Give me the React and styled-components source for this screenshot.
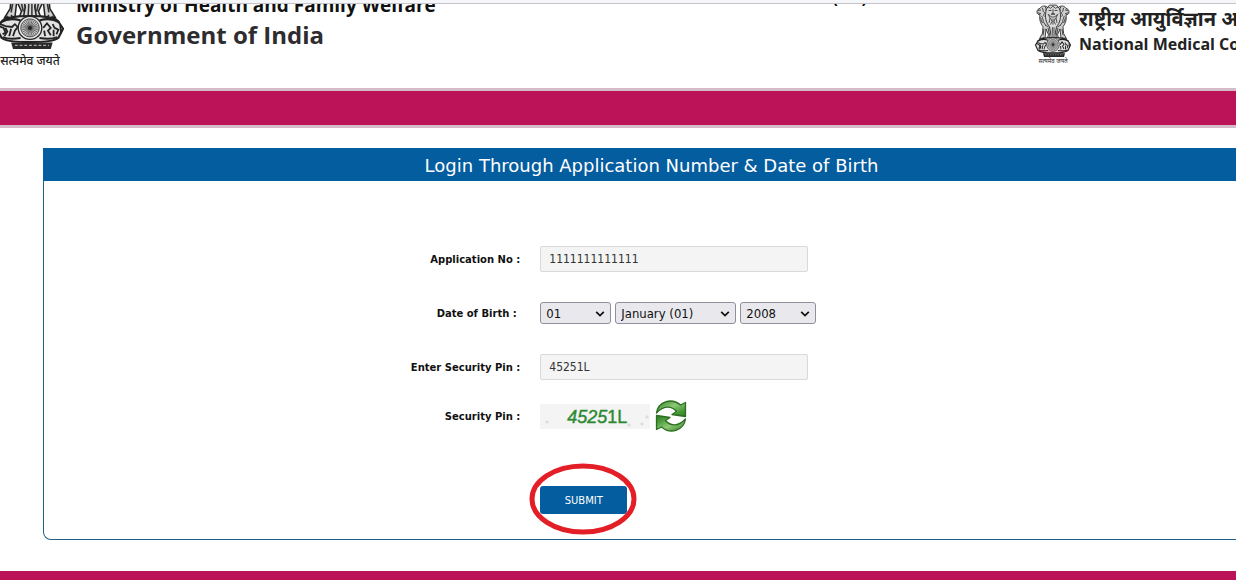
import styled, { createGlobalStyle } from "styled-components";

const digits = (n) => String(n).padStart(2, "0");
const days = Array.from({ length: 31 }, (_, i) => digits(i + 1));
const months = [
  "January", "February", "March", "April", "May", "June", "July",
  "August", "September", "October", "November", "December",
].map((name, i) => `${name} (${digits(i + 1)})`);
const years = Array.from({ length: 30 }, (_, i) => String(2008 - i));

function DateSelect({ label, options, width }) {
  return (
    <SelectBox $width={width}>
      <Select aria-label={label} defaultValue={options[0]}>
        {options.map((option) => (
          <option key={option}>{option}</option>
        ))}
      </Select>
      <svg width="10" height="8" viewBox="0 0 10 8" fill="none" stroke="#111" strokeWidth="1.7">
        <path d="M1.2 1.8 L5 5.6 L8.8 1.8" />
      </svg>
    </SelectBox>
  );
}

// one animal of the capital; the second one is mirrored
function Lion({ flip }) {
  return (
    <g transform={flip ? "translate(72 0) scale(-1 1)" : undefined}>
      <path
        d="M10 8 C4 9 2 16 6 19 L10 20 C8 28 11 36 16 42 L15 54 L9 64 H20 L22 46 L27 57 L24 65 H32 L30 40 L32 16 L26 7 C21 2 13 3 10 8 Z"
        fill="#d0d0d0" stroke="#222" strokeWidth="1.6"
      />
      <path
        d="M6 12 L12 11 M5 16 L12 18 M14 7 C18 10 14 13 18 15 S14 20 19 23 M20 5 C25 9 19 12 24 15 S19 20 24 24 M13 22 C17 26 13 28 18 31 M22 25 C27 29 21 32 27 35 M11 25 C13 28 11 30 15 35 M15 31 L21 39 M20 39 L27 42 M18 46 L16 58 M26 44 L29 57 M11 62 L14 64 M16 61 L18 64"
        fill="none" stroke="#333" strokeWidth="1.7"
      />
    </g>
  );
}

function Emblem({ width, height }) {
  return (
    <svg width={width} height={height} viewBox="0 0 72 98" preserveAspectRatio="none" aria-hidden="true">
      <Lion />
      <Lion flip />
      <path d="M23 9 C18 25 23 36 29 42 L31 52 L29 64 H43 L41 52 L43 42 C49 36 54 25 49 9 L43 2 H29 Z" fill="#d8d8d8" stroke="#222" strokeWidth="1.6" />
      <path
        d="M26 5 L31 8 L36 4 L41 8 L46 5 M27 12 H33 M39 12 H45 M36 9 V17 L32 19 H40 L36 17 M28 20 Q36 29 44 20 M26 18 L30 26 L28 35 M46 18 L42 26 L44 35 M31 26 L34 32 L31 38 M41 26 L38 32 L41 38 M36 27 V38 M35 43 L34 63 M38 43 L38 63"
        fill="none" stroke="#333" strokeWidth="1.6"
      />
      <path d="M6 68 C12 60 60 60 66 68 L71 76 L66 86 C58 92 14 92 6 86 L1 76 Z" fill="#e2e2e2" stroke="#222" strokeWidth="2.2" />
      <path d="M5 69 C13 64 20 65 26 67 M67 69 C59 64 52 65 46 67 M7 85 C14 88 20 87 26 86 M65 85 C58 88 52 87 46 86" stroke="#222" fill="none" strokeWidth="2.2" />
      <path d="M3 73 L8 75 L10 80 L7 82 M5 71 L10 73 L17 74 L20 71 L23 74 L20 78 L18 84 M10 75 L12 79 L9 84 M16 76 L14 84" fill="none" stroke="#222" strokeWidth="1.9" />
      <path d="M50 75 L54 70 L58 75 L55 78 L58 83 M51 78 L52 84 M60 71 L62 75 L66 77 L64 82 M68 72 L69 81 M61 77 L61 84" fill="none" stroke="#222" strokeWidth="1.9" />
      <circle cx="36" cy="75" r="12.5" fill="#e6e6e6" stroke="#222" strokeWidth="1.4" />
      <circle cx="36" cy="75" r="9.8" fill="#ccc" stroke="#444" />
      {Array.from({ length: 12 }, (_, i) => (
        <path key={i} d="M36 65.5 V84.5" stroke="#555" strokeWidth=".8" transform={`rotate(${i * 15} 36 75)`} />
      ))}
      <circle cx="36" cy="75" r="2" fill="#222" />
      <path d="M16 91 H60 L58 98 H18 Z" fill="#2a2a2a" />
      <path d="M20 94 H56" stroke="#aaa" strokeWidth="1.2" strokeDasharray="3 2" />
    </svg>
  );
}

function RefreshIcon() {
  const arrow = "M1.5 13 C3 2 16 -3 25.5 5 L30.5 2.5 V16.5 L17 14.5 L21.5 11.5 C16 5 8 6 1.5 13 Z";
  return (
    <svg width="32" height="32" viewBox="0 0 32 32" aria-hidden="true">
      <defs>
        <linearGradient id="leaf" x1="0" y1="0" x2="1" y2="1">
          <stop offset="0" stopColor="#2f7f24" />
          <stop offset=".45" stopColor="#8fc878" />
          <stop offset=".75" stopColor="#4b9a3a" />
          <stop offset="1" stopColor="#2b7a22" />
        </linearGradient>
      </defs>
      <g fill="url(#leaf)" stroke="#2b6e20" strokeWidth="1.3" strokeLinejoin="round">
        <path d={arrow} />
        <path d={arrow} transform="rotate(180 16 16)" />
      </g>
    </svg>
  );
}

function App() {
  return (
    <>
      <GlobalStyle />
      <TopEdge />
      <Header>
        <Brand>
          <NationalEmblem>
            <Emblem width={68} height={90} />
            <Motto>सत्यमेव जयते</Motto>
          </NationalEmblem>
          <MinistryNames>
            <Ministry>Ministry of Health and Family Welfare</Ministry>
            <Government>Government of India</Government>
          </MinistryNames>
        </Brand>
        <Exam>(UG)</Exam>
        <Commission>
          <CommissionEmblem>
            <Emblem width={36} height={53} />
            <Motto $small>सत्यमेव जयते</Motto>
          </CommissionEmblem>
          <CommissionNames>
            <HindiName>राष्ट्रीय आयुर्विज्ञान आयोग</HindiName>
            <EnglishName>National Medical Commission</EnglishName>
          </CommissionNames>
        </Commission>
      </Header>
      <NavBand />
      <Main>
        <Panel>
          <Title>Login Through Application Number &amp; Date of Birth</Title>
          <Form onSubmit={(e) => e.preventDefault()}>
            <Label htmlFor="application">Application No :</Label>
            <TextInput id="application" defaultValue="1111111111111" />

            <Label as="span">Date of Birth :&nbsp;</Label>
            <DateFields>
              <DateSelect label="Day" options={days} width={71} />
              <DateSelect label="Month" options={months} width={121} />
              <DateSelect label="Year" options={years} width={76} />
            </DateFields>

            <Label htmlFor="pin">Enter Security Pin :</Label>
            <TextInput id="pin" defaultValue="45251L" />

            <Label as="span">Security Pin :</Label>
            <CaptchaRow>
              <Captcha>
                <i>4525</i>1L
              </Captcha>
              <RefreshButton type="button" aria-label="Refresh security pin">
                <RefreshIcon />
              </RefreshButton>
            </CaptchaRow>

            <SubmitCell>
              <SubmitButton type="submit">SUBMIT</SubmitButton>
              <Ring viewBox="0 0 108 72" aria-hidden="true">
                <ellipse cx="54" cy="36" rx="51" ry="33" />
              </Ring>
            </SubmitCell>
          </Form>
        </Panel>
      </Main>
      <FooterBand />
    </>
  );
}

const GlobalStyle = createGlobalStyle`
  * {
    box-sizing: border-box;
  }
  body {
    margin: 0;
    overflow-x: hidden;
    background: #fff;
    font-family: "DejaVu Sans", Verdana, sans-serif;
  }
`;

const TopEdge = styled.div`
  height: 4px;
  background: #f5f6fa;
  border-bottom: 1px solid #c4c4ca;
`;

const Header = styled.header`
  height: 84px;
  display: flex;
  align-items: flex-start;
  overflow: hidden;
  white-space: nowrap;
`;

const Brand = styled.div`
  display: flex;
  flex: 1;
`;

const NationalEmblem = styled.div`
  display: flex;
  flex-direction: column;
  align-items: center;
  width: 68px;
  margin-top: -45px;
  margin-left: -4px;
`;

const Motto = styled.span`
  font-family: "Noto Sans", "Noto Sans Devanagari", sans-serif;
  font-size: ${(props) => (props.$small ? "6px" : "12px")};
  line-height: ${(props) => (props.$small ? "8px" : "24px")};
  font-weight: ${(props) => (props.$small ? 400 : 500)};
  color: #222;
`;

const MinistryNames = styled.div`
  margin: -13px 0 0 12px;
  font-family: "Open Sans", sans-serif;
  font-weight: 700;
`;

const Ministry = styled.div`
  font-size: 19px;
  line-height: 28px;
  color: #111;
`;

const Government = styled.div`
  font-size: 24px;
  line-height: 32px;
  color: #2e2c2f;
`;

const Exam = styled.div`
  margin: -18px 168px 0 0;
  font-family: "Open Sans", sans-serif;
  font-size: 16px;
  line-height: 24px;
  font-weight: 700;
`;

const Commission = styled.div`
  display: flex;
  width: 201px;
`;

const CommissionEmblem = styled.div`
  display: flex;
  flex-direction: column;
  align-items: center;
  width: 36px;
`;

const CommissionNames = styled.div`
  margin-left: 8px;
  font-family: "Noto Sans", "Noto Sans Devanagari", sans-serif;
  font-weight: 700;
  color: #222;
`;

const HindiName = styled.div`
  font-size: 20px;
  line-height: 30px;
`;

const EnglishName = styled.div`
  font-family: "Open Sans", sans-serif;
  font-size: 16px;
  line-height: 20px;
`;

const NavBand = styled.nav`
  height: 40px;
  background: #bc1358;
  background-clip: padding-box;
  border-top: 3px solid #d3bcc8;
  border-bottom: 3px solid #d3bcc8;
`;

const Main = styled.main`
  width: calc(100% + 24px);
  padding: 20px 0 31px 43px;
`;

const Panel = styled.section`
  border: 1px solid #1c6287;
  border-top: 0;
  border-radius: 0 0 8px 8px;
`;

const Title = styled.h1`
  margin: 0 -1px;
  padding-top: 2px;
  font-size: 18px;
  line-height: 31px;
  font-weight: 400;
  text-align: center;
  color: #fff;
  background: #045d9f;
`;

const Form = styled.form`
  display: grid;
  grid-template-columns: 39.2% 1fr;
  grid-template-rows: 54px 54px 54px 44px;
  column-gap: 20px;
  align-items: center;
  padding: 51px 0 25px;
`;

const Label = styled.label`
  font-size: 10px;
  font-weight: 700;
  text-align: right;
  color: #111;
`;

const TextInput = styled.input`
  width: 268px;
  height: 26px;
  padding: 0 8px;
  border: 1px solid #d9d9d9;
  border-radius: 2px;
  background: #f4f4f4;
  color: #333;
  font-family: "DejaVu Sans Condensed", "DejaVu Sans", sans-serif;
  font-size: 12px;
`;

const DateFields = styled.div`
  display: flex;
  gap: 4px;
`;

const SelectBox = styled.div`
  display: flex;
  position: relative;
  width: ${(props) => props.$width}px;
  svg {
    position: absolute;
    right: 6px;
    top: 8px;
    pointer-events: none;
  }
`;

const Select = styled.select`
  appearance: none;
  width: 100%;
  height: 22px;
  padding: 0 5px;
  border: 1px solid #8f8f9d;
  border-radius: 3px;
  background: #e9e9ed;
  color: #111;
  font-family: "DejaVu Sans Condensed", "DejaVu Sans", sans-serif;
  font-size: 13px;
`;

const CaptchaRow = styled.div`
  display: flex;
  align-items: center;
  gap: 5px;
`;

const Captcha = styled.div`
  width: 110px;
  height: 25px;
  padding-left: 4px;
  background:
    radial-gradient(circle at 7px 18px, #dcdcdc 1px, transparent 2px),
    radial-gradient(circle at 89px 21px, #d4ddd4 1px, transparent 2px),
    radial-gradient(circle at 102px 20px, #dcdcdc 1px, transparent 2px),
    radial-gradient(circle at 107px 13px, #dcdcdc 1px, transparent 2px),
    #f4f4f4;
  color: #2c8a33;
  font-family: "Liberation Sans", Arial, sans-serif;
  font-size: 18px;
  line-height: 26px;
  text-align: center;
  -webkit-text-stroke: 0.4px #2c8a33;
`;

const RefreshButton = styled.button`
  display: flex;
  padding: 0;
  border: 0;
  background: none;
`;

const SubmitCell = styled.div`
  grid-column: 2;
  position: relative;
  justify-self: start;
  margin-top: 48px;
`;

const SubmitButton = styled.button`
  display: block;
  width: 87px;
  height: 28px;
  padding: 0;
  border: 0;
  border-radius: 3px;
  background: #045d9f;
  color: #fff;
  font-family: inherit;
  font-size: 10px;
`;

const Ring = styled.svg`
  position: absolute;
  top: -23px;
  left: -11px;
  width: 108px;
  height: 72px;
  pointer-events: none;
  fill: none;
  stroke: #e31e26;
  stroke-width: 5px;
`;

const FooterBand = styled.footer`
  height: 32px;
  background: #bc1358;
`;

export default App;
